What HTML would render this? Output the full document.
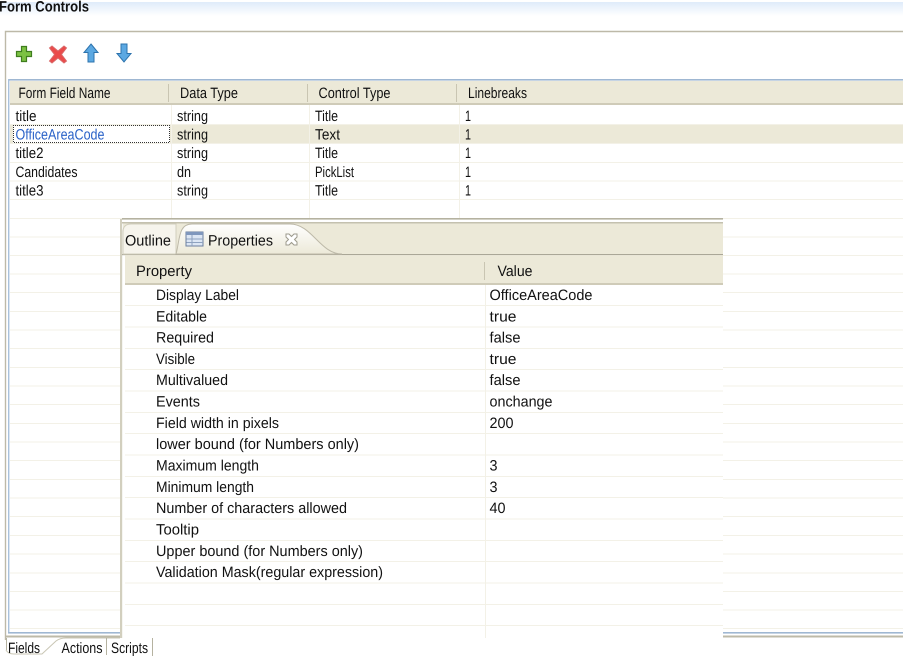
<!DOCTYPE html>
<html><head><meta charset="utf-8"><style>
html,body{margin:0;padding:0;background:#fff;width:903px;height:656px;overflow:hidden}
svg{display:block}
text{font-family:"Liberation Sans",sans-serif;font-size:15px;fill:#111}
</style></head><body>
<svg width="903" height="656" viewBox="0 0 903 656" xmlns="http://www.w3.org/2000/svg" text-rendering="geometricPrecision">
<defs>
<linearGradient id="g" x1="0" y1="0" x2="0" y2="1"><stop offset="0" stop-color="#dfebfa"/><stop offset="1" stop-color="#fff"/></linearGradient>
<linearGradient id="t" x1="0" y1="0" x2="0" y2="1"><stop offset="0" stop-color="#fff"/><stop offset="1" stop-color="#ece9d8"/></linearGradient>
</defs>
<rect width="903" height="656" fill="#fff"/>
<rect x="0" y="2" width="903" height="14" fill="url(#g)"/>
<text x="-1" y="11.500" textLength="90" lengthAdjust="spacingAndGlyphs" font-weight="bold" style="font-size:15px">Form Controls</text>
<!-- outer panel -->
<path d="M5.500 640V31.500H903" fill="none" stroke="#bdb9a8" stroke-width="1.400"/>
<!-- toolbar icons -->
<path d="M21.500 46.500h5v5h5v5h-5v5h-5v-5h-5v-5h5z" fill="#7cc243" stroke="#3f7d1e" stroke-width="1.200"/>
<path d="M52 46l6 5 6-5 2.500 2-5 6.500 5 6.500-2.500 2-6-5-6 5-2.500-2 5-6.500-5-6.500z" fill="#ea4b4b" stroke="#d96a6a"/>
<path d="M91 44l7 8.500h-4v9.500h-6v-9.500h-4z" fill="#5ba8e2" stroke="#2d73ad" stroke-width="1"/>
<path d="M121 44h6v9.500h4l-7 8.500-7-8.500h4z" fill="#5ba8e2" stroke="#2d73ad" stroke-width="1"/>
<!-- main table -->
<rect x="8" y="79" width="895" height="1.600" fill="#9fb7d2"/>
<rect x="8" y="79" width="1.400" height="553" fill="#a9c1dc"/>
<rect x="10" y="81" width="893" height="23" fill="#ece9d8"/>
<rect x="10" y="103" width="893" height="2" fill="#cfcbb8"/>
<rect x="168" y="84" width="1" height="18" fill="#c9c5b2"/>
<rect x="307" y="84" width="1" height="18" fill="#c9c5b2"/>
<rect x="456" y="84" width="1" height="18" fill="#c9c5b2"/>
<rect x="10" y="125" width="893" height="18.500" fill="#ece9d8"/>
<rect x="13" y="125.500" width="157" height="18" fill="#fff"/>
<g fill="#f3f1e7">
<rect x="10" y="124" width="893" height="1"/><rect x="10" y="143" width="893" height="1"/><rect x="10" y="162" width="893" height="1"/><rect x="10" y="180.500" width="893" height="1"/><rect x="10" y="199" width="893" height="1"/><rect x="10" y="218" width="893" height="1"/><rect x="10" y="236.500" width="893" height="1"/><rect x="10" y="255" width="893" height="1"/><rect x="10" y="273.500" width="893" height="1"/><rect x="10" y="292" width="893" height="1"/><rect x="10" y="311" width="893" height="1"/><rect x="10" y="329.500" width="893" height="1"/><rect x="10" y="348" width="893" height="1"/><rect x="10" y="367" width="893" height="1"/><rect x="10" y="385.500" width="893" height="1"/><rect x="10" y="404" width="893" height="1"/><rect x="10" y="423" width="893" height="1"/><rect x="10" y="441.500" width="893" height="1"/><rect x="10" y="460" width="893" height="1"/><rect x="10" y="479" width="893" height="1"/><rect x="10" y="497.500" width="893" height="1"/><rect x="10" y="516" width="893" height="1"/><rect x="10" y="535" width="893" height="1"/><rect x="10" y="553.500" width="893" height="1"/><rect x="10" y="572.500" width="893" height="1"/><rect x="10" y="591" width="893" height="1"/><rect x="10" y="609.500" width="893" height="1"/><rect x="10" y="628" width="893" height="1"/>
<rect x="171" y="105" width="1" height="113"/><rect x="309" y="105" width="1" height="113"/><rect x="459" y="105" width="1" height="113"/>
</g>
<rect x="13.500" y="125.500" width="156" height="17" fill="none" stroke="#333" stroke-dasharray="1 1" stroke-dashoffset="0.500"/>
<rect x="8" y="632" width="895" height="1.600" fill="#9fb7d2"/>
<rect x="6" y="635.500" width="897" height="2" fill="#bdbaa8"/>
<text x="18.500" y="98" textLength="92" lengthAdjust="spacingAndGlyphs">Form Field Name</text>
<text x="180" y="98" textLength="58" lengthAdjust="spacingAndGlyphs">Data Type</text>
<text x="318.500" y="98" textLength="72" lengthAdjust="spacingAndGlyphs">Control Type</text>
<text x="468" y="98" textLength="59" lengthAdjust="spacingAndGlyphs">Linebreaks</text>
<text x="15.500" y="121" textLength="21" lengthAdjust="spacingAndGlyphs">title</text>
<text x="177" y="121" textLength="31" lengthAdjust="spacingAndGlyphs">string</text>
<text x="315" y="121" textLength="23" lengthAdjust="spacingAndGlyphs">Title</text>
<text x="465" y="121" textLength="6" lengthAdjust="spacingAndGlyphs">1</text>
<text x="15.500" y="139.500" textLength="89" lengthAdjust="spacingAndGlyphs" style="fill:#2a62c8">OfficeAreaCode</text>
<text x="177" y="139.500" textLength="31" lengthAdjust="spacingAndGlyphs">string</text>
<text x="315" y="139.500" textLength="25" lengthAdjust="spacingAndGlyphs">Text</text>
<text x="465" y="139.500" textLength="6" lengthAdjust="spacingAndGlyphs">1</text>
<text x="15.500" y="158" textLength="28" lengthAdjust="spacingAndGlyphs">title2</text>
<text x="177" y="158" textLength="31" lengthAdjust="spacingAndGlyphs">string</text>
<text x="315" y="158" textLength="23" lengthAdjust="spacingAndGlyphs">Title</text>
<text x="465" y="158" textLength="6" lengthAdjust="spacingAndGlyphs">1</text>
<text x="15.500" y="177" textLength="62" lengthAdjust="spacingAndGlyphs">Candidates</text>
<text x="177" y="177" textLength="14" lengthAdjust="spacingAndGlyphs">dn</text>
<text x="315" y="177" textLength="39" lengthAdjust="spacingAndGlyphs">PickList</text>
<text x="465" y="177" textLength="6" lengthAdjust="spacingAndGlyphs">1</text>
<text x="15.500" y="195.500" textLength="28" lengthAdjust="spacingAndGlyphs">title3</text>
<text x="177" y="195.500" textLength="31" lengthAdjust="spacingAndGlyphs">string</text>
<text x="315" y="195.500" textLength="23" lengthAdjust="spacingAndGlyphs">Title</text>
<text x="465" y="195.500" textLength="6" lengthAdjust="spacingAndGlyphs">1</text>
<!-- properties panel -->
<rect x="122" y="218" width="601" height="420" fill="#fff"/>
<rect x="120" y="219" width="2.200" height="419" fill="#d2cfbe"/>
<rect x="122" y="218" width="601" height="1.600" fill="#b5b2a0"/>
<rect x="122" y="220" width="601" height="2" fill="#fff"/>
<rect x="122" y="222" width="601" height="1.500" fill="#c4c1af"/>
<rect x="123" y="223.500" width="600" height="30.500" fill="#ece9d8"/>
<rect x="122" y="254" width="601" height="1.200" fill="#aaa797"/>
<rect x="125" y="255.200" width="598" height="27.800" fill="#ece9d8"/>
<rect x="125" y="283" width="598" height="2" fill="#cfcbb8"/>
<path d="M123 254V232Q123 224 131 224H176V254Z" fill="#f6f4ec" stroke="#d2cfbe"/>
<path d="M176 254C180 240 178 224 192 224H290C312 224 320 254 342 254Z" fill="url(#t)" stroke="#bdb9a8"/>
<rect x="186" y="232" width="17" height="14" fill="#dce6f4" stroke="#6b7f9e"/>
<rect x="186" y="232" width="17" height="3" fill="#7f97bd"/>
<path d="M186.500 239H203M186.500 242.500H203M192 235V246" stroke="#8ea2c0" fill="none"/>
<path d="M286 234l3 0 2.500 2.500 2.500-2.500 3 0 0 3-2.500 2.500 2.500 2.500 0 3-3 0-2.500-2.500-2.500 2.500-3 0 0-3 2.500-2.500-2.500-2.500z" fill="#fff" stroke="#9c9a8c"/>
<text x="125" y="245.500" textLength="46" lengthAdjust="spacingAndGlyphs">Outline</text>
<text x="208" y="245.500" textLength="65" lengthAdjust="spacingAndGlyphs">Properties</text>
<text x="136" y="276" textLength="56" lengthAdjust="spacingAndGlyphs">Property</text>
<text x="497.500" y="276" textLength="35" lengthAdjust="spacingAndGlyphs">Value</text>
<rect x="484" y="262" width="1" height="18" fill="#c9c5b2"/>
<g fill="#f3f1e7">
<rect x="125" y="305" width="598" height="1"/><rect x="125" y="326.500" width="598" height="1"/><rect x="125" y="348" width="598" height="1"/><rect x="125" y="369" width="598" height="1"/><rect x="125" y="390.500" width="598" height="1"/><rect x="125" y="412" width="598" height="1"/><rect x="125" y="433" width="598" height="1"/><rect x="125" y="454.500" width="598" height="1"/><rect x="125" y="476" width="598" height="1"/><rect x="125" y="497" width="598" height="1"/><rect x="125" y="518.500" width="598" height="1"/><rect x="125" y="540" width="598" height="1"/><rect x="125" y="561" width="598" height="1"/><rect x="125" y="582.500" width="598" height="1"/><rect x="125" y="604" width="598" height="1"/><rect x="125" y="625" width="598" height="1"/>
<rect x="485" y="285" width="1" height="353"/>
</g>
<text x="156" y="300" textLength="83" lengthAdjust="spacingAndGlyphs">Display Label</text>
<text x="489.500" y="300" textLength="103" lengthAdjust="spacingAndGlyphs">OfficeAreaCode</text>
<text x="156" y="321.500" textLength="51" lengthAdjust="spacingAndGlyphs">Editable</text>
<text x="489.500" y="321.500" textLength="27" lengthAdjust="spacingAndGlyphs">true</text>
<text x="156" y="342.500" textLength="58" lengthAdjust="spacingAndGlyphs">Required</text>
<text x="489.500" y="342.500" textLength="31" lengthAdjust="spacingAndGlyphs">false</text>
<text x="156" y="364" textLength="39" lengthAdjust="spacingAndGlyphs">Visible</text>
<text x="489.500" y="364" textLength="27" lengthAdjust="spacingAndGlyphs">true</text>
<text x="156" y="385" textLength="72" lengthAdjust="spacingAndGlyphs">Multivalued</text>
<text x="489.500" y="385" textLength="31" lengthAdjust="spacingAndGlyphs">false</text>
<text x="156" y="406.500" textLength="44" lengthAdjust="spacingAndGlyphs">Events</text>
<text x="489.500" y="406.500" textLength="63" lengthAdjust="spacingAndGlyphs">onchange</text>
<text x="156" y="428" textLength="123" lengthAdjust="spacingAndGlyphs">Field width in pixels</text>
<text x="489.500" y="428" textLength="24" lengthAdjust="spacingAndGlyphs">200</text>
<text x="156" y="449" textLength="203" lengthAdjust="spacingAndGlyphs">lower bound (for Numbers only)</text>
<text x="156" y="470.500" textLength="103" lengthAdjust="spacingAndGlyphs">Maximum length</text>
<text x="489.500" y="470.500" textLength="8" lengthAdjust="spacingAndGlyphs">3</text>
<text x="156" y="492" textLength="98" lengthAdjust="spacingAndGlyphs">Minimum length</text>
<text x="489.500" y="492" textLength="8" lengthAdjust="spacingAndGlyphs">3</text>
<text x="156" y="513" textLength="191" lengthAdjust="spacingAndGlyphs">Number of characters allowed</text>
<text x="489.500" y="513" textLength="16" lengthAdjust="spacingAndGlyphs">40</text>
<text x="156" y="534.500" textLength="43" lengthAdjust="spacingAndGlyphs">Tooltip</text>
<text x="156" y="556" textLength="207" lengthAdjust="spacingAndGlyphs">Upper bound (for Numbers only)</text>
<text x="156" y="577" textLength="227" lengthAdjust="spacingAndGlyphs">Validation Mask(regular expression)</text>
<!-- bottom tabs -->
<rect x="6" y="638" width="1" height="12" fill="#b5b2a0"/>
<path d="M6 650Q8 654 14 654H42L56 641Q60 638 66 638H120" fill="none" stroke="#c9c6b4"/>
<rect x="106" y="638" width="1" height="17" fill="#b5b2a0"/>
<rect x="152" y="638" width="1" height="18" fill="#b5b2a0"/>
<text x="8" y="653" textLength="32" lengthAdjust="spacingAndGlyphs">Fields</text>
<text x="61.500" y="653" textLength="41" lengthAdjust="spacingAndGlyphs">Actions</text>
<text x="111" y="653" textLength="37" lengthAdjust="spacingAndGlyphs">Scripts</text>
</svg>
</body></html>
